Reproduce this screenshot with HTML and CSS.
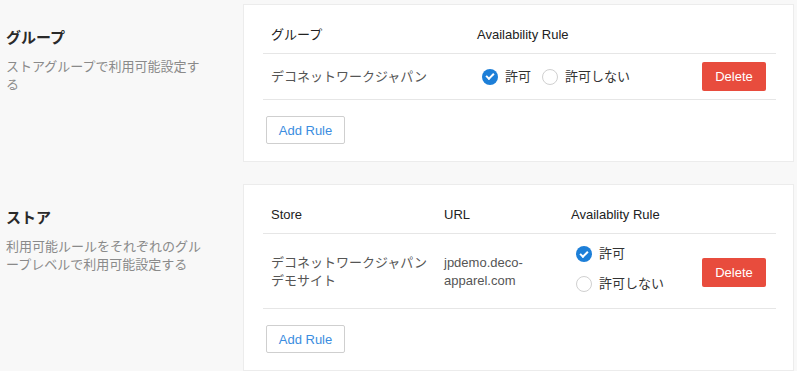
FILE: index.html
```html
<!DOCTYPE html>
<html lang="ja">
<head>
  <meta charset="UTF-8">
  <meta name="viewport" content="width=device-width, initial-scale=1.0">
  <title>Availability Rules</title>
  <link rel="stylesheet" href="styles.css">
</head>
<body>
  <div class="page">
    <section class="section">
      <div class="section-info">
        <h2>グループ</h2>
        <p>ストアグループで利用可能設定する</p>
      </div>
      <div class="card">
        <table class="rules group-rules">
          <thead>
            <tr>
              <th class="col-group">グループ</th>
              <th>Availability Rule</th>
              <th></th>
            </tr>
          </thead>
          <tbody>
            <tr>
              <td>デコネットワークジャパン</td>
              <td>
                <div class="radios inline">
                  <label class="radio"><span class="dot checked"></span>許可</label>
                  <label class="radio"><span class="dot"></span>許可しない</label>
                </div>
              </td>
              <td class="actions"><button class="btn-delete">Delete</button></td>
            </tr>
          </tbody>
        </table>
        <button class="btn-add">Add Rule</button>
      </div>
    </section>

    <section class="section">
      <div class="section-info">
        <h2>ストア</h2>
        <p>利用可能ルールをそれぞれのグループレベルで利用可能設定する</p>
      </div>
      <div class="card">
        <table class="rules store-rules">
          <thead>
            <tr>
              <th class="col-store">Store</th>
              <th class="col-url">URL</th>
              <th>Availablity Rule</th>
              <th></th>
            </tr>
          </thead>
          <tbody>
            <tr>
              <td>デコネットワークジャパン<br>デモサイト</td>
              <td>jpdemo.deco-<br>apparel.com</td>
              <td>
                <div class="radios stacked">
                  <label class="radio"><span class="dot checked"></span>許可</label>
                  <label class="radio"><span class="dot"></span>許可しない</label>
                </div>
              </td>
              <td class="actions"><button class="btn-delete">Delete</button></td>
            </tr>
          </tbody>
        </table>
        <button class="btn-add">Add Rule</button>
      </div>
    </section>
  </div>
</body>
</html>
```
FILE: styles.css
```css
body {
  margin: 0;
  padding: 0;
  background-color: #f8f8f8;
  font-family: "Liberation Sans", Arial, "Noto Sans CJK JP", sans-serif;
  font-size: 13px;
  color: #333;
}

.page {
  padding: 4px 3px 0 6px;
  display: flex;
  flex-direction: column;
  gap: 22px;
}

.section {
  display: flex;
  align-items: flex-start;
}

.section-info {
  width: 237px;
  flex-shrink: 0;
  padding-top: 24px;
}

.section-info h2 {
  margin: 0 0 10px;
  font-size: 15px;
  line-height: 20px;
  font-weight: bold;
  color: #2a2a2a;
}

.section-info p {
  margin: 0;
  width: 200px;
  line-height: 18px;
  color: #8a8a8a;
}

.card {
  flex: 1;
  background: #fff;
  border: 1px solid #ececec;
  padding: 17px 17px 17px 19px;
}

.rules {
  width: 100%;
  border-collapse: collapse;
}

.rules th {
  text-align: left;
  font-weight: normal;
  color: #222;
  line-height: 18px;
  padding: 4px 8px 9px;
  border-bottom: 1px solid #e6e6e6;
}

.rules td {
  color: #555;
  line-height: 18px;
  padding: 8px;
  vertical-align: middle;
  border-bottom: 1px solid #e6e6e6;
}

.col-group {
  width: 190px;
}

.col-store {
  width: 157px;
}

.col-url {
  width: 111px;
}

.rules td.actions {
  text-align: right;
  padding-right: 10px;
  width: 64px;
}

.radios {
  margin-left: 5px;
}

.radios.inline {
  display: flex;
  gap: 11px;
}

.radios.stacked {
  display: flex;
  flex-direction: column;
  padding-top: 1px;
}

.radios.stacked .radio {
  height: 24px;
  margin-bottom: 6px;
}

.store-rules td {
  padding-top: 7px;
  padding-bottom: 6px;
}

.store-rules td.actions {
  padding-top: 8px;
}

.radio {
  display: flex;
  align-items: center;
  gap: 7px;
  color: #333;
}

.dot {
  width: 16px;
  height: 16px;
  border-radius: 50%;
  box-sizing: border-box;
  border: 1px solid #d0d0d0;
  background: #fff;
  display: inline-flex;
  align-items: center;
  justify-content: center;
}

.dot.checked {
  border: none;
  background-color: #1d7fd8;
}

.dot.checked::after {
  content: "";
  width: 6px;
  height: 3px;
  border-left: 2px solid #fff;
  border-bottom: 2px solid #fff;
  transform: translateY(-1px) rotate(-45deg);
}

.btn-delete {
  width: 64px;
  height: 29px;
  border: none;
  border-radius: 2px;
  background-color: #e84c3d;
  color: #fff;
  font-family: inherit;
  font-size: 13px;
  cursor: pointer;
}

.btn-add {
  margin: 16px 0 0 3px;
  width: 79px;
  height: 28px;
  background: #fff;
  border: 1px solid #cfcfcf;
  border-radius: 2px;
  color: #3b8de0;
  font-family: inherit;
  font-size: 13px;
  cursor: pointer;
}
```
